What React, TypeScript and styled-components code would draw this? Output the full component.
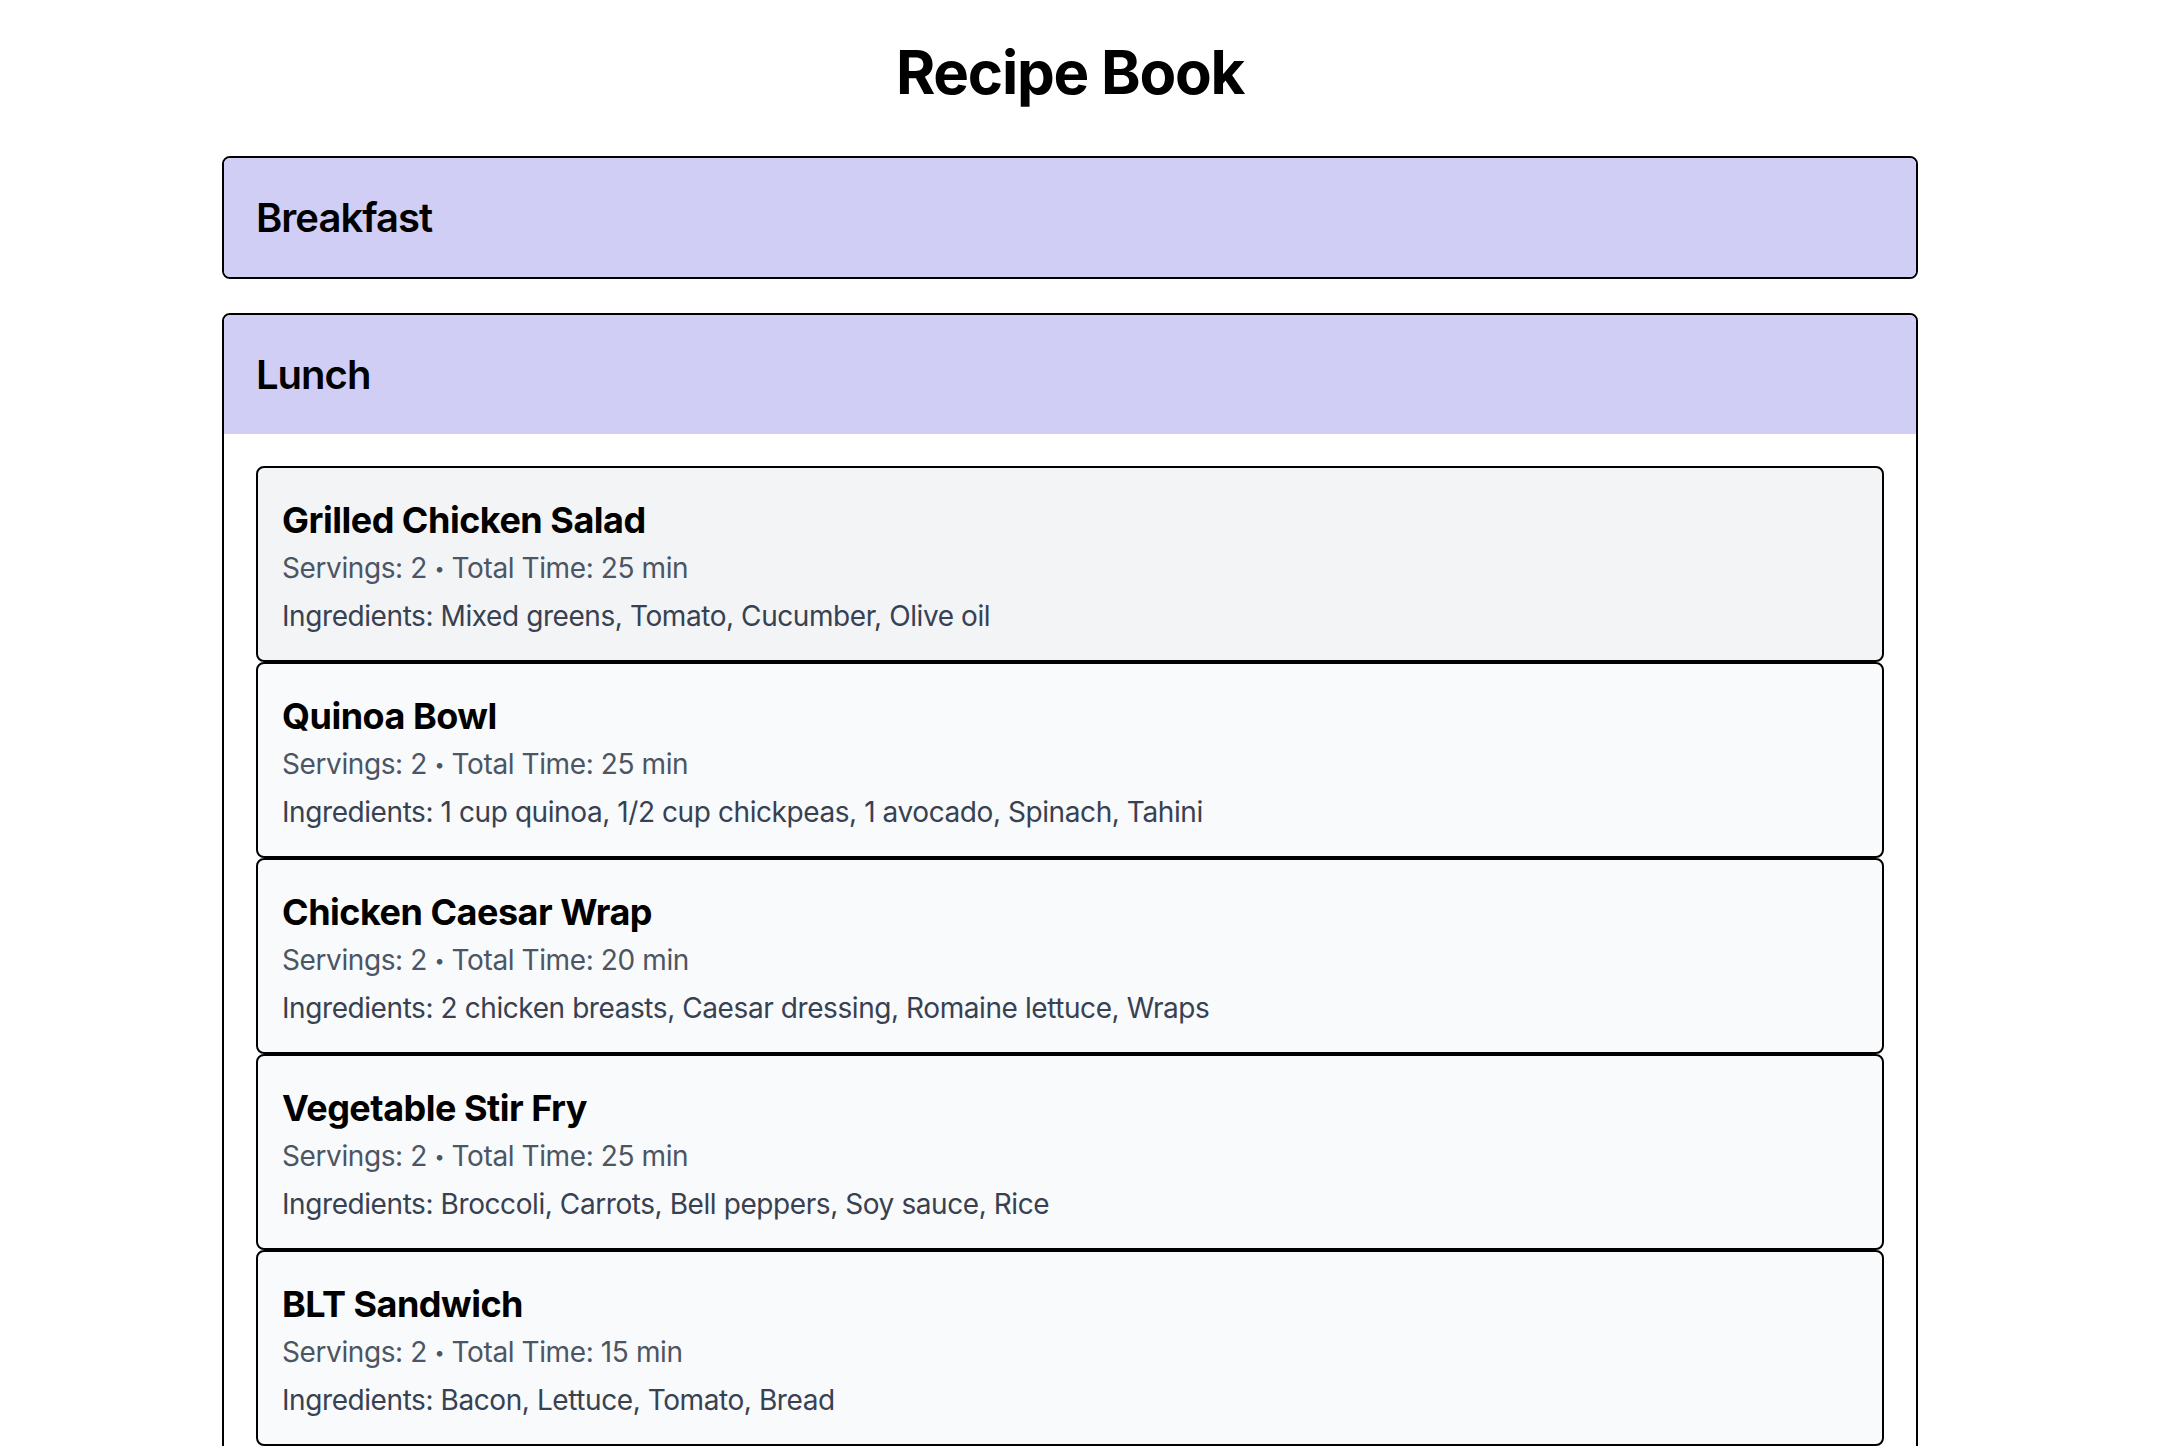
import React from "react";
import styled, { createGlobalStyle } from "styled-components";

const GlobalStyle = createGlobalStyle`
  html, body {
    margin: 0;
    padding: 0;
    background: #ffffff;
    font-family: Inter, "Noto Sans", "Liberation Sans", sans-serif;
    color: #000000;
  }
  * { box-sizing: border-box; }
`;

const Page = styled.div`
  padding: 36px 20px 48px 0;
`;

const Container = styled.main`
  max-width: 1696px;
  margin: 0 auto;
`;

const Title = styled.h1`
  margin: 0 0 48px;
  text-align: center;
  font-size: 60px;
  line-height: 72px;
  font-weight: 700;
  letter-spacing: -1.25px;
`;

const Sections = styled.div`
  display: flex;
  flex-direction: column;
  gap: 34px;
`;

const Section = styled.section`
  border: 2px solid #000;
  border-radius: 8px;
  overflow: hidden;
`;

const SectionHeader = styled.h2`
  margin: 0;
  padding: 32px 32px 31px;
  background: #d0cef5;
  font-size: 40px;
  line-height: 56px;
  font-weight: 600;
  letter-spacing: -1px;
`;

const SectionBody = styled.div`
  padding: 32px;
  display: flex;
  flex-direction: column;
`;

const Card = styled.article<{ $active?: boolean }>`
  border: 2px solid #000;
  border-radius: 8px;
  padding: 24px;
  background: ${(p) => (p.$active ? "#f3f4f6" : "#f9fafb")};
`;

const RecipeName = styled.h3`
  margin: 0;
  font-size: 36px;
  line-height: 56px;
  font-weight: 700;
  letter-spacing: -0.5px;
`;

const Meta = styled.p`
  margin: 0;
  font-size: 28px;
  line-height: 40px;
  color: #4b5563;
  letter-spacing: -0.4px;
`;

const Dot = styled.span`
  font-size: 18px;
  line-height: 0;
  vertical-align: 3px;
`;

const Ingredients = styled.p`
  margin: 8px 0 0;
  font-size: 28px;
  line-height: 40px;
  color: #374151;
  letter-spacing: -0.42px;
`;

type Recipe = { name: string; servings: number; time: number; ingredients: string[] };

const lunch: Recipe[] = [
  { name: "Grilled Chicken Salad", servings: 2, time: 25, ingredients: ["Mixed greens", "Tomato", "Cucumber", "Olive oil"] },
  { name: "Quinoa Bowl", servings: 2, time: 25, ingredients: ["1 cup quinoa", "1/2 cup chickpeas", "1 avocado", "Spinach", "Tahini"] },
  { name: "Chicken Caesar Wrap", servings: 2, time: 20, ingredients: ["2 chicken breasts", "Caesar dressing", "Romaine lettuce", "Wraps"] },
  { name: "Vegetable Stir Fry", servings: 2, time: 25, ingredients: ["Broccoli", "Carrots", "Bell peppers", "Soy sauce", "Rice"] },
  { name: "BLT Sandwich", servings: 2, time: 15, ingredients: ["Bacon", "Lettuce", "Tomato", "Bread"] },
];

export default function App() {
  return (
    <Page>
      <GlobalStyle />
      <Container>
        <Title>Recipe Book</Title>
        <Sections>
          <Section>
            <SectionHeader>Breakfast</SectionHeader>
          </Section>
          <Section>
            <SectionHeader>Lunch</SectionHeader>
            <SectionBody>
              {lunch.map((r, i) => (
                <Card key={r.name} $active={i === 0}>
                  <RecipeName>{r.name}</RecipeName>
                  <Meta>
                    Servings: {r.servings} <Dot>•</Dot> Total Time: {r.time} min
                  </Meta>
                  <Ingredients>Ingredients: {r.ingredients.join(", ")}</Ingredients>
                </Card>
              ))}
            </SectionBody>
          </Section>
          <Section>
            <SectionHeader>Dinner</SectionHeader>
          </Section>
        </Sections>
      </Container>
    </Page>
  );
}
